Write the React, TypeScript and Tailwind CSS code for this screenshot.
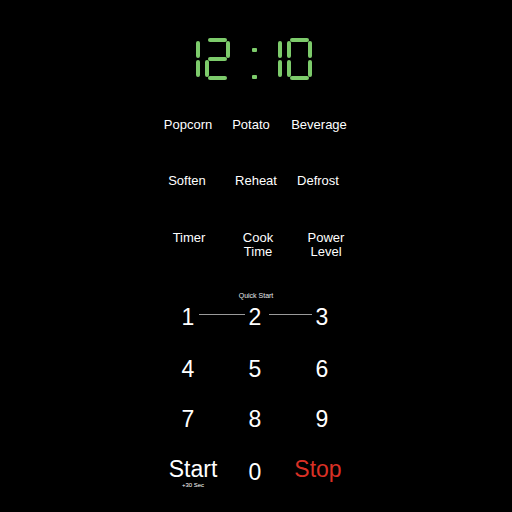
import React from "react";

// seven-segment clock digit, segments drawn as small blocks
const SEG: Record<string, string> = {
  a: "top-0 left-[3px] w-[19px] h-[4px]",
  b: "top-[3px] right-0 w-[4px] h-[17px]",
  c: "top-[22px] right-0 w-[4px] h-[17px]",
  d: "bottom-0 left-[3px] w-[19px] h-[4px]",
  e: "top-[22px] left-0 w-[4px] h-[17px]",
  f: "top-[3px] left-0 w-[4px] h-[17px]",
  g: "top-[19px] left-[3px] w-[19px] h-[4px]",
};

const DIGITS: Record<string, string> = {
  "0": "abcdef",
  "1": "bc",
  "2": "abged",
};

function Digit({ value }: { value: string }) {
  return (
    <div className="relative w-[25px] h-[42px]">
      {DIGITS[value].split("").map((s) => (
        <span key={s} className={`absolute rounded-[2px] bg-[#7dcb6b] ${SEG[s]}`} />
      ))}
    </div>
  );
}

function Clock() {
  return (
    <div role="img" aria-label="12:10" className="flex w-full pl-[175px] mt-[38px] h-[42px]">
      <Digit value="1" />
      <div className="w-[5px]" />
      <Digit value="2" />
      <div className="w-[22px]" />
      <div className="w-[5px] h-[42px] relative">
        <span className="absolute top-[10px] left-0 w-[5px] h-[4px] rounded-[1px] bg-[#7dcb6b]" />
        <span className="absolute top-[37px] left-0 w-[5px] h-[4px] rounded-[1px] bg-[#7dcb6b]" />
      </div>
      <Digit value="1" />
      <div className="w-[5px]" />
      <Digit value="0" />
    </div>
  );
}

const labels = [
  { text: ["Popcorn"], nudge: "" },
  { text: ["Potato"], nudge: "-translate-x-[4px]" },
  { text: ["Beverage"], nudge: "-translate-x-[3px]" },
  { text: ["Soften"], nudge: "-translate-x-[1px]" },
  { text: ["Reheat"], nudge: "translate-x-[1px]" },
  { text: ["Defrost"], nudge: "-translate-x-[4px]" },
  { text: ["Timer"], nudge: "translate-x-[1px]" },
  { text: ["Cook", "Time"], nudge: "translate-x-[3px]" },
  { text: ["Power", "Level"], nudge: "translate-x-[4px]" },
];

export default function App() {
  return (
    <div className="w-[512px] h-[512px] bg-black text-white flex flex-col items-center font-['Liberation_Sans',Arial,sans-serif] overflow-hidden">
      <Clock />

      {/* preset buttons */}
      <div className="mt-[38px] mr-[2px] w-[201px] grid grid-cols-3 grid-rows-[56px_57px_28px] text-[13px] leading-[14px]">
        {labels.map((l) => (
          <div key={l.text.join(" ")} className={`flex flex-col items-center text-center ${l.nudge}`}>
            {l.text.map((t) => (
              <span key={t}>{t}</span>
            ))}
          </div>
        ))}
      </div>

      {/* keypad */}
      <div className="mt-[33px] text-[7px] leading-[8px] text-gray-200">Quick Start</div>
      <div className="mt-[3px] mr-[2px] w-[201px] grid grid-cols-3 grid-rows-[52px_50px_50px_57px] text-[23px] leading-[28px]">
        <div className="relative flex justify-center">
          1
          <span className="absolute top-[11px] left-[44px] w-[46px] h-px bg-[#9a9a9a]" />
        </div>
        <div className="relative flex justify-center">
          2
          <span className="absolute top-[11px] left-[47px] w-[43px] h-px bg-[#9a9a9a]" />
        </div>
        <div className="flex justify-center">3</div>
        <div className="flex justify-center">4</div>
        <div className="flex justify-center">5</div>
        <div className="flex justify-center">6</div>
        <div className="flex justify-center">7</div>
        <div className="flex justify-center">8</div>
        <div className="flex justify-center">9</div>
        <div className="flex flex-col items-center translate-x-[5px]">
          <span>Start</span>
          <span className="text-[6px] leading-[6px] -mt-[1px]">+30 Sec</span>
        </div>
        <div className="flex justify-center pt-[3px]">0</div>
        <div className="flex justify-center -translate-x-[4px] text-[#d93025]">Stop</div>
      </div>
    </div>
  );
}
